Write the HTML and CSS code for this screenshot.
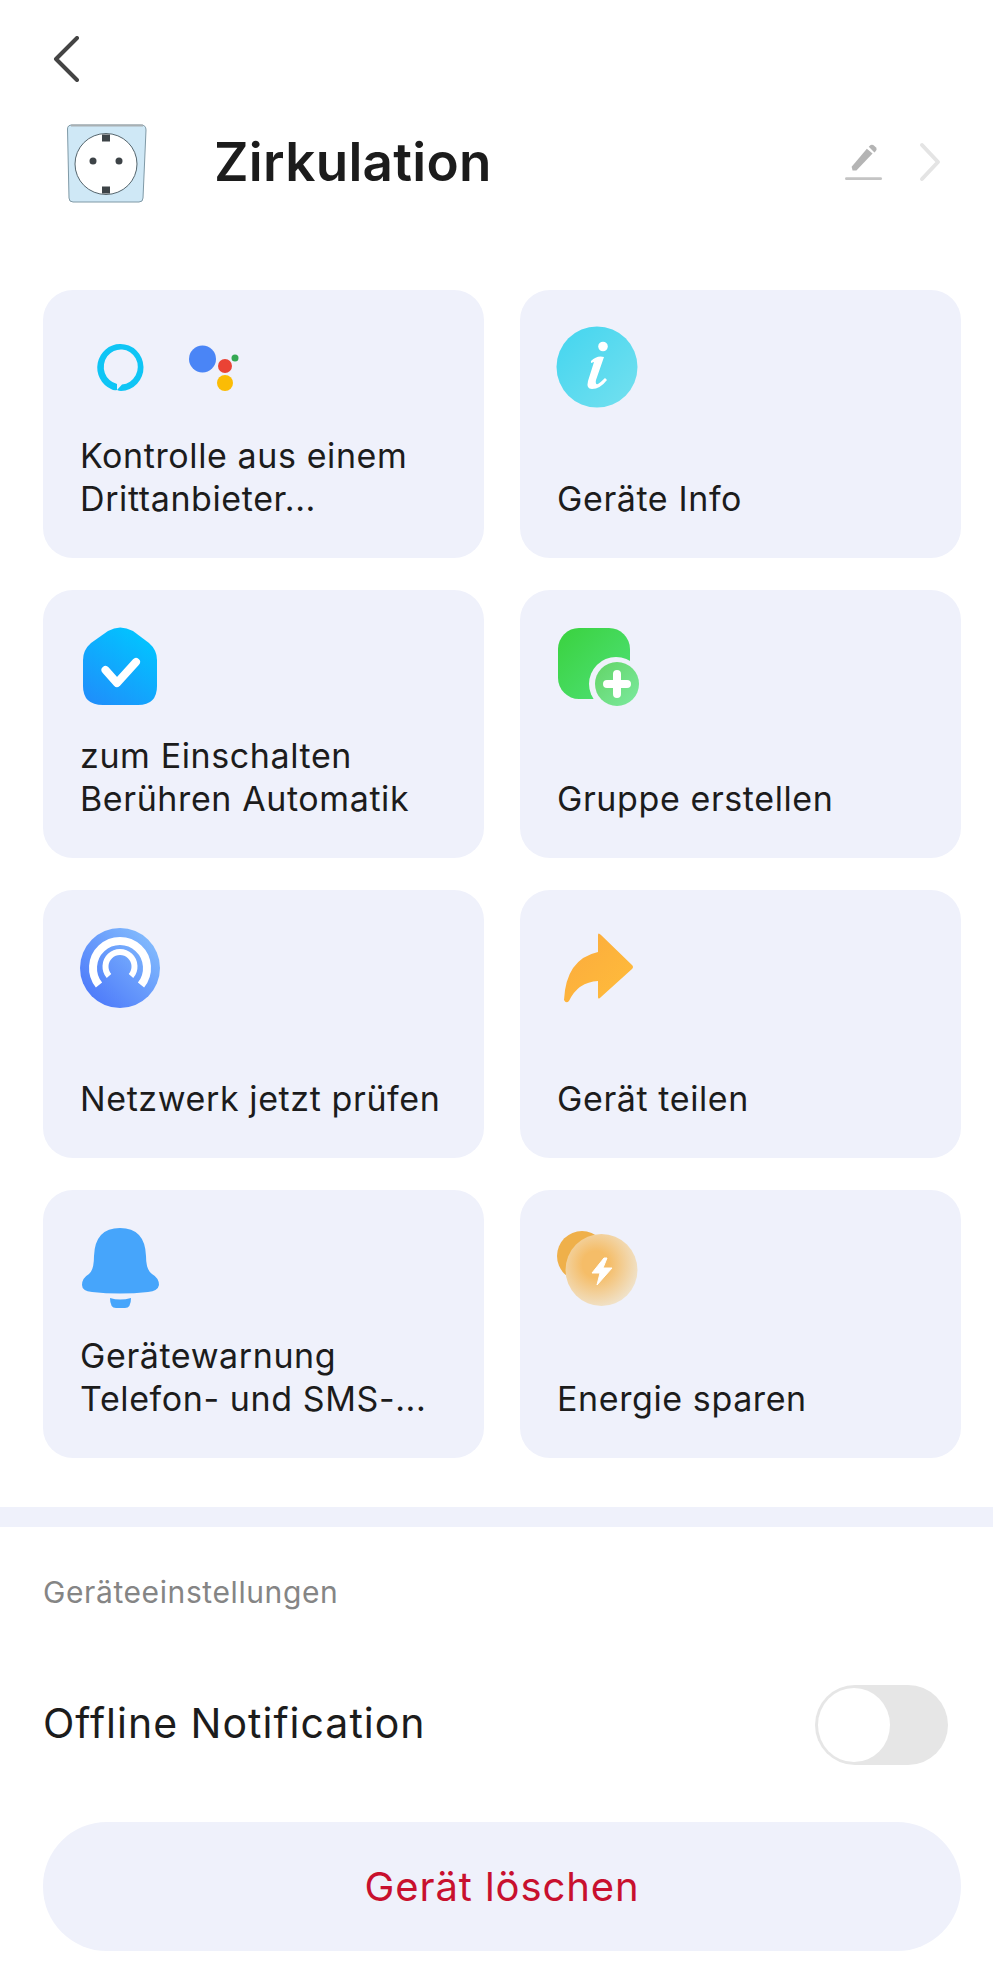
FILE: index.html
```html
<!DOCTYPE html>
<html lang="de">
<head>
<meta charset="utf-8">
<title>Zirkulation</title>
<link rel="stylesheet" href="styles.css">
</head>
<body>
<main class="page">
  <div class="back">
    <svg class="back-icon" viewBox="0 0 30 46"><path d="M25 2 L4 23 L25 44" fill="none" stroke="#444" stroke-width="4" stroke-linecap="round" stroke-linejoin="round"/></svg>
  </div>
  <header class="device">
    <svg class="device-icon" viewBox="0 0 80 80">
      <path d="M0.500 5 Q0.500 1 5 1 L74 1 Q79 1 79 6 L76 74 Q76 78 72 78 L6 78 Q2 78 2 74 Z" fill="#cfe8f6" stroke="#7f99a6" stroke-width="1"/>
      <path d="M4 1.500 H76" stroke="#a9b0b3" stroke-width="2"/>
      <ellipse cx="39" cy="40" rx="31" ry="30.500" fill="#fff" stroke="#55656d" stroke-width="1"/>
      <rect x="35" y="10.500" width="8" height="7" fill="#3d4347"/>
      <rect x="35" y="62.500" width="8" height="7" fill="#3d4347"/>
      <circle cx="26" cy="37" r="3.500" fill="#3d4347"/>
      <circle cx="52" cy="37" r="3.500" fill="#3d4347"/>
    </svg>
    <h1 class="device-name">Zirkulation</h1>
    <svg class="edit-icon" viewBox="0 0 40 40">
      <path d="M8 28 L7 24 L23 5 L29 10 L12 28 Z" fill="#b4b4b4"/>
      <path d="M25 3 L27 1 Q29 0 31 2 L33 4 Q34 6 32 8 L31 9 Z" fill="#b4b4b4"/>
      <rect x="0" y="35" width="39" height="3" rx="1.500" fill="#c4c4c4"/>
    </svg>
    <svg class="next-icon" viewBox="0 0 22 40"><path d="M3 3 L19 20 L3 37" fill="none" stroke="#e4e4e4" stroke-width="4" stroke-linecap="round" stroke-linejoin="round"/></svg>
  </header>

  <section class="grid">
    <article class="card">
      <svg class="icon icon-wide" viewBox="0 0 170 84">
        <path d="M40 18 A23 23.500 0 0 0 31 63 Q34 65 37 64 L37 58 A17 17.500 0 1 1 42 58.400 L37 64 Q39 65 41 65 A23 23.500 0 0 0 40 18 Z" fill="#0fc5f5"/>
        <circle cx="122.500" cy="33" r="13.500" fill="#4a85f6"/>
        <circle cx="145" cy="40" r="7" fill="#ea4335"/>
        <circle cx="155" cy="32" r="3.500" fill="#34a853"/>
        <circle cx="145" cy="57" r="8" fill="#fbbc05"/>
      </svg>
      <p class="label">Kontrolle aus einem<br>Drittanbieter...</p>
    </article>
    <article class="card">
      <svg class="icon" viewBox="0 0 90 84">
        <defs><linearGradient id="gi" x1="0" y1="0" x2="1" y2="1"><stop offset="0" stop-color="#43d5ef"/><stop offset="1" stop-color="#74e0ef"/></linearGradient></defs>
        <circle cx="40" cy="41" r="40.500" fill="url(#gi)"/>
        <circle cx="46" cy="20.500" r="4.800" fill="#fff"/>
        <path d="M34 35 Q40 29 47 31 L39 54 Q38 59 41 58 Q44 56 48 52 L50 54 Q43 63 35 63 Q29 63 31 55 L37 36 L34 37 Z" fill="#fff"/>
      </svg>
      <p class="label">Geräte Info</p>
    </article>
    <article class="card">
      <svg class="icon" viewBox="0 0 90 84">
        <defs><linearGradient id="gh" x1="0.200" y1="1" x2="0.800" y2="0.100"><stop offset="0" stop-color="#1e90fb"/><stop offset="1" stop-color="#02c3ff"/></linearGradient></defs>
        <path d="M28 5 Q40 -2 53 5 L69 17 Q77 24 77 34 L77 60 Q77 79 58 79 L23 79 Q3 79 3 60 L3 34 Q3 24 11 17 Z" fill="url(#gh)"/>
        <path d="M25.500 44 L37 57 L56 36" fill="none" stroke="#fff" stroke-width="8" stroke-linecap="round" stroke-linejoin="round"/>
      </svg>
      <p class="label">zum Einschalten<br>Berühren Automatik</p>
    </article>
    <article class="card">
      <svg class="icon" viewBox="0 0 90 84">
        <defs>
          <linearGradient id="gg" x1="0" y1="0" x2="1" y2="1"><stop offset="0" stop-color="#3ad23e"/><stop offset="1" stop-color="#4fe179"/></linearGradient>
          <linearGradient id="gp" x1="0" y1="0" x2="1" y2="1"><stop offset="0" stop-color="#62d466"/><stop offset="1" stop-color="#7cea9f"/></linearGradient>
        </defs>
        <rect x="1" y="2" width="72" height="71" rx="21" fill="url(#gg)"/>
        <circle cx="59" cy="58" r="27" fill="#eff1fb"/>
        <circle cx="60" cy="58" r="22" fill="url(#gp)"/>
        <path d="M60 48 V68 M50 58 H70" stroke="#fff" stroke-width="8" stroke-linecap="round"/>
      </svg>
      <p class="label">Gruppe erstellen</p>
    </article>
    <article class="card">
      <svg class="icon" viewBox="0 0 90 84">
        <defs><linearGradient id="gn" gradientUnits="userSpaceOnUse" x1="8" y1="74" x2="72" y2="10"><stop offset="0" stop-color="#4c79fa"/><stop offset="1" stop-color="#83bcfd"/></linearGradient></defs>
        <circle cx="40" cy="42" r="40" fill="url(#gn)"/>
        <path d="M19 59 A27 27 0 1 1 61 59" fill="none" stroke="#fff" stroke-width="8"/>
        <path d="M29 50 A14.500 14.500 0 1 1 51 50" fill="none" stroke="#fff" stroke-width="6"/>
        <path d="M18 63 L33 47 Q35 46 36 45 A5.500 5.500 0 1 1 44 45 Q45 46 47 47 L62 63 L62 72 L18 72 Z" fill="url(#gn)"/>
      </svg>
      <p class="label">Netzwerk jetzt prüfen</p>
    </article>
    <article class="card">
      <svg class="icon" viewBox="0 0 90 84">
        <defs><linearGradient id="ga" x1="0" y1="0" x2="1" y2="1"><stop offset="0" stop-color="#fbaa3d"/><stop offset="1" stop-color="#ffbd3b"/></linearGradient></defs>
        <path d="M41 9 Q41 6 44 9 L75 39 Q77 41 75 43 L44 71 Q41 74 41 71 L41 55 Q21 56 12 75 Q9 78 7 74 Q9 33 41 26 Z" fill="url(#ga)"/>
      </svg>
      <p class="label">Gerät teilen</p>
    </article>
    <article class="card">
      <svg class="icon" viewBox="0 0 90 84">
        <path d="M40 2 Q65 2 66 30 Q66 44 72 48 Q79 52 79 59 Q78 65 68 66 Q40 69 12 66 Q2 65 2 59 Q2 52 9 48 Q14 44 14 30 Q15 2 40 2 Z" fill="#46a5fb"/>
        <path d="M30 72 Q40 75 51 72 Q51 82 45 82 L36 82 Q30 82 30 72 Z" fill="#46a5fb"/>
      </svg>
      <p class="label">Gerätewarnung<br>Telefon- und SMS-...</p>
    </article>
    <article class="card">
      <svg class="icon" viewBox="0 0 90 84">
        <defs><radialGradient id="ge" cx="0.420" cy="0.420" r="0.620"><stop offset="0.300" stop-color="#f5bd68"/><stop offset="1" stop-color="#f0e3cc"/></radialGradient></defs>
        <circle cx="25" cy="30" r="25" fill="#efb04a"/>
        <circle cx="44.500" cy="44" r="36" fill="url(#ge)"/>
        <path d="M47 32 L35 47 L43 47 L40 59 L55 42 L46 42 L50 32 Z" fill="#fff" stroke="#fff" stroke-width="1" stroke-linejoin="round"/>
      </svg>
      <p class="label">Energie sparen</p>
    </article>
  </section>

  <div class="band"></div>

  <h2 class="section-title">Geräteeinstellungen</h2>
  <div class="setting">
    <span class="setting-name">Offline Notification</span>
    <span class="toggle"><span class="knob"></span></span>
  </div>
  <button class="delete" type="button">Gerät löschen</button>
</main>
</body>
</html>
```
FILE: styles.css
```css
* { box-sizing: border-box; }
html, body { margin: 0; background: #fff; }
body { font-family: "Inter", "Liberation Sans", sans-serif; color: #1c1c1c; }
.page { width: 993px; height: 1988px; overflow: hidden; }

.back { padding: 36px 0 0 52px; height: 82px; }
.back-icon { display: block; width: 30px; height: 46px; }

.device { display: flex; align-items: center; height: 78px; margin-top: 43px; padding: 0 52px 0 67px; }
.device-icon { width: 80px; height: 80px; flex: none; }
.device-name { flex: 1; margin: 0 0 4px 67px; font-size: 53px; line-height: 60px; font-weight: 600; letter-spacing: 0.3px; }
.edit-icon { width: 38px; height: 40px; flex: none; margin: 0 36px 2px 0; }
.next-icon { width: 22px; height: 40px; flex: none; margin-bottom: 4px; }

.grid { display: grid; grid-template-columns: 441px 441px; grid-auto-rows: 268px; column-gap: 36px; row-gap: 32px; margin-top: 87px; padding-left: 43px; }
.card { display: flex; flex-direction: column; justify-content: space-between; padding: 36px 20px 38px 37px; background: #eff1fb; border-radius: 30px; }
.icon { display: block; width: 90px; height: 84px; overflow: visible; }
.icon-wide { width: 170px; }
.label { margin: 0; font-size: 34px; line-height: 43px; letter-spacing: 0.6px; }

.band { height: 20px; margin-top: 49px; background: #eff1fb; }

.section-title { margin: 45px 0 0 43px; font-size: 30px; line-height: 40px; font-weight: 400; letter-spacing: 0.6px; color: #858585; }

.setting { display: flex; align-items: center; justify-content: space-between; height: 80px; margin-top: 73px; padding: 0 45px 0 43px; }
.setting-name { padding-bottom: 4px; font-size: 41px; font-weight: 400; letter-spacing: 1px; }
.toggle { display: block; width: 133px; height: 80px; padding: 3px; border-radius: 40px; background: #e6e6e6; }
.knob { display: block; width: 72px; height: 74px; border-radius: 50%; background: #fff; }

.delete { display: block; width: 918px; height: 129px; margin: 57px 0 0 43px; border: 0; border-radius: 64px; background: #eff1fb; color: #c8102e; font-family: inherit; font-size: 40px; letter-spacing: 0.9px; }
```
